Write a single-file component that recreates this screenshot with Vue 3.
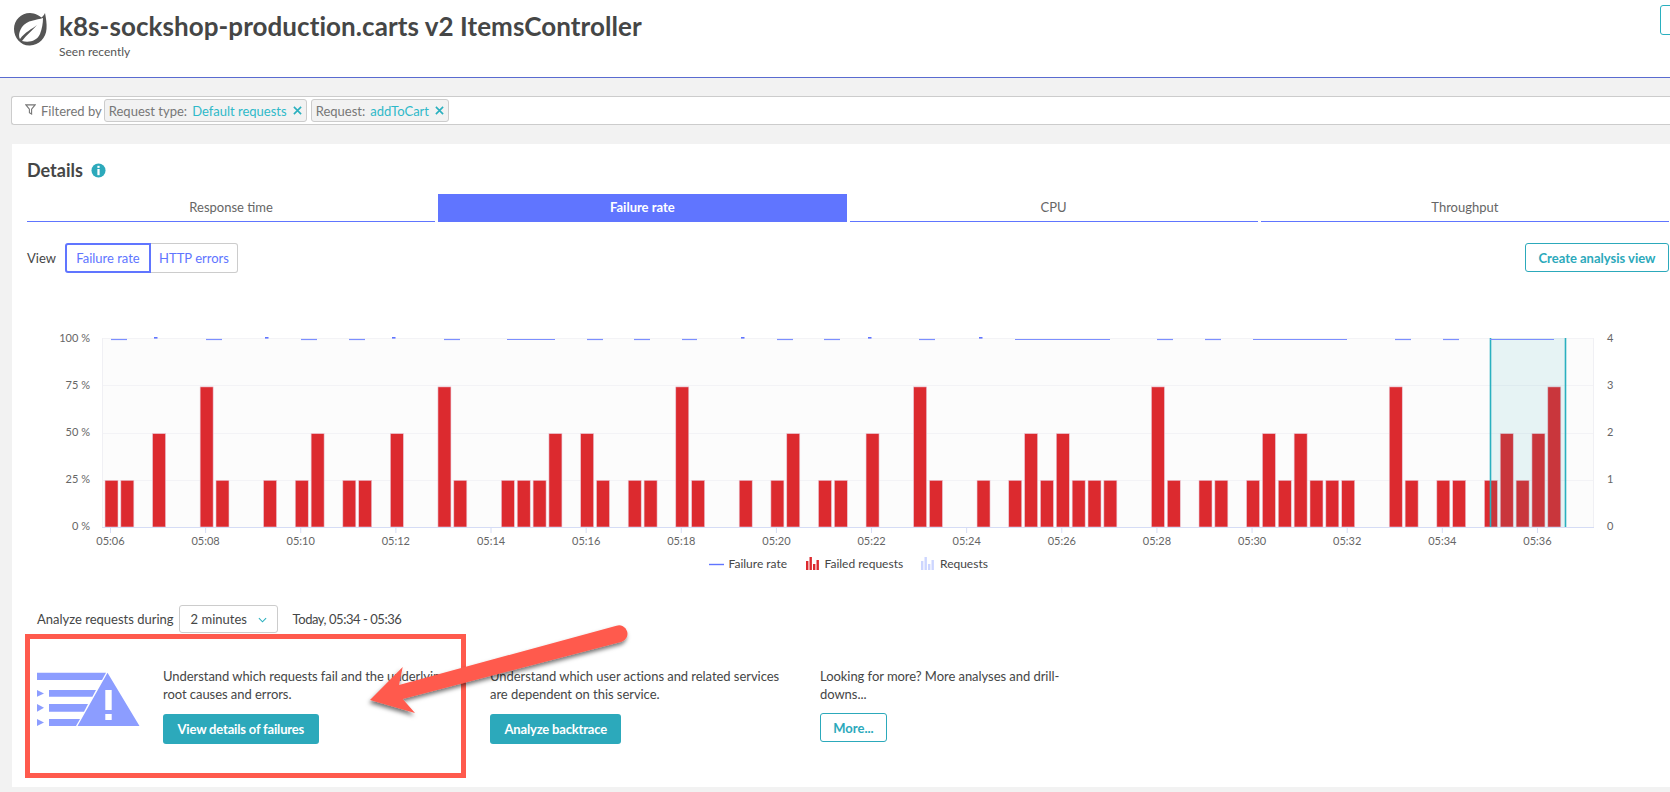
<template>
  <div class="page">
    <!-- Title -->
    <header class="top">
      <svg class="logo" viewBox="0 0 34 34" aria-hidden="true">
        <path d="M32 1 C33 6 34 12 33.5 17 C33 26 26 33 17 33.5 C8 34 1 26 1 17 C1 8 8 1 17 1 C22 1 27 4 28.5 5.5 C29.5 4.5 31 3 32 1 Z" fill="#555"/>
        <path d="M30 6 C24 8 14 8 9 15 C5 21 6 25 7 27 C12 20 19 17 24 13 C20 18 13 23 9 29 C16 31 24 29 27 22 C29 17 30 11 30 6 Z" fill="#fff"/>
      </svg>
      <div class="top__text">
        <h1 class="top__title">k8s-sockshop-production.carts v2 ItemsController</h1>
        <div class="top__sub">Seen recently</div>
      </div>
      <div class="top__stub"></div>
    </header>

    <!-- Filter bar -->
    <div class="filter">
      <svg class="filter__icon" viewBox="0 0 12 12" aria-hidden="true">
        <path d="M1 1 H11 L7.2 5.6 V11 L4.8 9.6 V5.6 Z" fill="none" stroke="#777" stroke-width="1.2"/>
      </svg>
      <span class="filter__label">Filtered by</span>
      <span class="chip" v-for="c in chips" :key="c.name">
        <span class="chip__name">{{ c.name }}</span>
        <span class="chip__value">{{ c.value }}</span>
        <svg class="chip__x" viewBox="0 0 10 10" aria-hidden="true">
          <path d="M1 1 L9 9 M9 1 L1 9" stroke="#2ab0bf" stroke-width="1.8" fill="none"/>
        </svg>
      </span>
    </div>

    <!-- Details card -->
    <section class="card">
      <div class="details">
        <h2 class="details__title">Details</h2>
        <svg class="details__info" viewBox="0 0 16 16" aria-hidden="true">
          <circle cx="8" cy="8" r="7.5" fill="#2ca9bb"/>
          <rect x="6.8" y="3" width="2.4" height="2.2" fill="#fff"/>
          <rect x="6.8" y="6.4" width="2.4" height="6.6" fill="#fff"/>
        </svg>
      </div>

      <nav class="tabs">
        <div v-for="t in tabs" :key="t" class="tab" :class="{ 'tab--on': t === 'Failure rate' }">{{ t }}</div>
      </nav>

      <div class="view">
        <span class="view__label">View</span>
        <div class="toggle">
          <span class="toggle__btn toggle__btn--on">Failure rate</span>
          <span class="toggle__btn">HTTP errors</span>
        </div>
        <button class="btn-outline btn-outline--right">Create analysis view</button>
      </div>

      <!-- viewBox uses page coordinates, simpler to read against the axis -->
      <svg class="chart" viewBox="27 320 1643 260" width="1643" height="260">
        <rect x="102" y="338" width="1492" height="189" fill="#fcfcfc"/>
        <line v-for="g in grid" :key="g" x1="102" x2="1594" :y1="g" :y2="g" stroke="#f3f3f6"/>
        <line x1="102.5" x2="102.5" y1="338" y2="527" stroke="#f0f0f4"/>
        <line x1="1593.5" x2="1593.5" y1="338" y2="527" stroke="#f0f0f4"/>

        <rect v-for="b in bars" :key="b.i" :x="b.x" :y="b.y" width="13" :height="b.h" fill="#dc2a2f" stroke="#e9c9d8" stroke-width="0.6"/>

        <rect x="1490" y="338" width="75.5" height="189" fill="#2aa8b5" fill-opacity="0.1"/>
        <line x1="1490.5" x2="1490.5" y1="338" y2="527" stroke="#2ab0bf" stroke-width="1.6"/>
        <line x1="1565.5" x2="1565.5" y1="338" y2="527" stroke="#2ab0bf" stroke-width="1.6"/>

        <line v-for="s in segs" :key="s[0]" :x1="s[0]" :x2="s[1]" y1="339.5" y2="339.5" stroke="#7c8fff" stroke-width="1.2"/>
        <rect v-for="d in dots" :key="d" :x="d" y="337" width="3.5" height="1.6" fill="#6075ff"/>

        <line x1="102" x2="1594" y1="527.5" y2="527.5" stroke="#d5dcf5"/>
        <g v-for="t in ticks" :key="t.label">
          <line :x1="t.x" :x2="t.x" y1="527" y2="533" stroke="#d5dcf5"/>
          <text class="axis" :x="t.x" y="544.5" text-anchor="middle">{{ t.label }}</text>
        </g>
        <text v-for="l in yLeft" :key="l.t" class="axis" x="90" :y="l.y" text-anchor="end">{{ l.t }}</text>
        <text v-for="l in yRight" :key="l.t" class="axis" x="1607" :y="l.y">{{ l.t }}</text>

        <!-- legend -->
        <line x1="709" x2="724" y1="564.5" y2="564.5" stroke="#6075ff" stroke-width="1.4"/>
        <text class="legend" x="728.5" y="568">Failure rate</text>
        <g fill="#dc2a2f">
          <rect x="806" y="561" width="2.4" height="9"/>
          <rect x="809.5" y="557" width="2.4" height="13"/>
          <rect x="813" y="564" width="2.4" height="6"/>
          <rect x="816.5" y="560" width="2.4" height="10"/>
        </g>
        <text class="legend" x="824.5" y="568">Failed requests</text>
        <g fill="#cdd6ff">
          <rect x="921" y="561" width="2.4" height="9"/>
          <rect x="924.5" y="557" width="2.4" height="13"/>
          <rect x="928" y="564" width="2.4" height="6"/>
          <rect x="931.5" y="560" width="2.4" height="10"/>
        </g>
        <text class="legend" x="940" y="568">Requests</text>
      </svg>

      <div class="analyze">
        <span>Analyze requests during</span>
        <span class="select">2 minutes
          <svg class="select__caret" viewBox="0 0 10 6" aria-hidden="true">
            <path d="M1 1 L5 5 L9 1" fill="none" stroke="#2ab0bf" stroke-width="1.2"/>
          </svg>
        </span>
        <span class="analyze__range">Today, 05:34 - 05:36</span>
      </div>

      <div class="solutions">
        <svg class="solutions__icon" viewBox="37 672 103 55" width="103" height="55" aria-hidden="true">
          <g fill="#8c9dff">
            <path d="M37 672.7 H106 L102 680 H37 Z"/>
            <path d="M37 690 L44 693.4 L37 696.7 Z"/>
            <path d="M49 690 H96 L92.4 696.7 H49 Z"/>
            <path d="M37 704 L44 707.8 L37 711.7 Z"/>
            <path d="M49 704 H88 L84 711.7 H49 Z"/>
            <path d="M37 719 L44 722.4 L37 726 Z"/>
            <path d="M49 719 H80 L76 726 H49 Z"/>
            <path fill-rule="evenodd" d="M107.5 672.7 L139.5 726 H77.5 Z M105.3 690 V710 H111.7 V690 Z M105.3 714 V720 H111.7 V714 Z"/>
          </g>
        </svg>
        <div class="sol">
          <p class="sol__text">Understand which requests fail and the underlying root causes and errors.</p>
          <button class="btn">View details of failures</button>
        </div>
        <div class="sol">
          <p class="sol__text">Understand which user actions and related services are dependent on this service.</p>
          <button class="btn">Analyze backtrace</button>
        </div>
        <div class="sol sol--narrow">
          <p class="sol__text">Looking for more? More analyses and drill-downs...</p>
          <button class="btn-outline">More...</button>
        </div>
      </div>
    </section>

    <!-- Annotation drawn over the screenshot -->
    <div class="mark-box"></div>
    <svg class="mark-arrow" viewBox="0 0 1670 792" aria-hidden="true">
      <defs>
        <filter id="arrow-shadow" x="-10%" y="-10%" width="120%" height="130%">
          <feDropShadow dx="-1" dy="3" stdDeviation="2" flood-color="#000" flood-opacity="0.55"/>
        </filter>
      </defs>
      <path filter="url(#arrow-shadow)" fill="#ff5a4d"
        d="M370 700 L402.7 667 L399 685 L616.5 625.8 A8 8 0 0 1 621.7 641.7 L402.7 699 L415 713 Z"/>
    </svg>
  </div>
</template>

<script setup>
const chips = [
  { name: 'Request type:', value: 'Default requests' },
  { name: 'Request:', value: 'addToCart' },
]
const tabs = ['Response time', 'Failure rate', 'CPU', 'Throughput']

// slot index -> failed request count, one slot is 20 seconds
const counts = {
  0: 1, 1: 1, 3: 2, 6: 3, 7: 1, 10: 1, 12: 1, 13: 2, 15: 1, 16: 1, 18: 2, 21: 3, 22: 1,
  25: 1, 26: 1, 27: 1, 28: 2, 30: 2, 31: 1, 33: 1, 34: 1, 36: 3, 37: 1, 40: 1, 42: 1, 43: 2,
  45: 1, 46: 1, 48: 2, 51: 3, 52: 1, 55: 1, 57: 1, 58: 2, 59: 1, 60: 2, 61: 1, 62: 1, 63: 1,
  66: 3, 67: 1, 69: 1, 70: 1, 72: 1, 73: 2, 74: 1, 75: 2, 76: 1, 77: 1, 78: 1, 81: 3, 82: 1,
  84: 1, 85: 1, 87: 1, 88: 2, 89: 1, 90: 2, 91: 3,
}
const bars = Object.entries(counts).map(([i, n]) => {
  const h = n * 46.7
  return { i, x: 105 + i * 15.855, y: 527 - h, h }
})

const grid = [338.5, 385.5, 433.5, 480.5]
const segs = [
  [111, 127], [206, 222], [301, 317], [349, 365], [444, 460], [507, 555], [587, 603],
  [634, 650], [682, 697], [777, 793], [824, 840], [919, 935], [1015, 1110], [1157, 1173],
  [1205, 1221], [1253, 1347], [1395, 1411], [1443, 1459], [1490, 1554],
]
const dots = [154, 265, 392, 741, 868, 979]

const ticks = []
for (let m = 0; m <= 15; m++) {
  ticks.push({ x: 110.5 + m * 95.13, label: `05:${String(6 + m * 2).padStart(2, '0')}` })
}
const yLeft = [
  { t: '100 %', y: 342 }, { t: '75 %', y: 389 }, { t: '50 %', y: 436 }, { t: '25 %', y: 483 }, { t: '0 %', y: 530 },
]
const yRight = [
  { t: '4', y: 342 }, { t: '3', y: 389 }, { t: '2', y: 436 }, { t: '1', y: 483 }, { t: '0', y: 530 },
]
</script>

<style>
html, body { margin: 0; background: #f2f2f2; overflow: hidden; }
</style>

<style scoped>
.page {
  position: relative;
  width: 1670px;
  height: 792px;
  overflow: hidden;
  background: #f2f2f2;
  color: #454646;
  font-family: "Lato", "Liberation Sans", sans-serif;
  font-size: 13px;
}

/* ─── Title ─────────────────────────────── */
.top {
  position: relative;
  height: 77px;
  box-sizing: content-box;
  display: flex;
  background: #fff;
  border-bottom: 1px solid #5a6bd0;
}
.logo { width: 34px; height: 34px; margin: 12px 12px 0 13px; flex-shrink: 0; }
.top__title { margin: 12px 0 0; font-size: 26px; line-height: 29px; font-weight: 700; color: #454646; white-space: nowrap; letter-spacing: 0.07px; }
.top__sub { margin-top: 3px; font-size: 12px; line-height: 15px; color: #555; }
.top__stub {
  position: absolute; left: 1660px; top: 5px;
  width: 30px; height: 28px;
  border: 1px solid #2ab0bf; border-radius: 3px;
}

/* ─── Filter ────────────────────────────── */
.filter {
  display: flex;
  align-items: center;
  height: 27px;
  margin: 18px 0 0 11px;
  padding-left: 13px;
  background: #fff;
  border: 1px solid #ccc;
  border-right: 0;
  border-radius: 3px 0 0 3px;
  font-size: 13px;
}
.filter__icon { width: 11px; height: 11px; margin-right: 5px; margin-bottom: 2px; }
.filter__label { color: #777; margin-right: 2px; }
.chip {
  display: flex; align-items: center;
  height: 21px; padding: 0 4px;
  margin-right: 4px;
  background: #f2f2f2; border: 1px solid #ccc; border-radius: 3px;
}
.chip__name { color: #777; margin-right: 5px; }
.chip__value { color: #2fb9c9; }
.chip__x { width: 9px; height: 9px; margin-left: 6px; }

/* ─── Card ──────────────────────────────── */
.card {
  height: 643px;
  margin: 19px 0 0 12px;
  padding: 0 1px 0 15px;
  box-sizing: border-box;
  background: #fff;
}
.details { display: flex; align-items: center; padding-top: 16px; height: 20px; box-sizing: content-box; }
.details__title { margin: 0; font-size: 18px; line-height: 20px; font-weight: 700; color: #454646; }
.details__info { width: 15px; height: 15px; margin-left: 8px; }

.tabs { display: grid; grid-template-columns: repeat(4, 1fr); gap: 3px; margin-top: 14px; }
.tab {
  height: 27px; line-height: 27px; text-align: center;
  border-bottom: 1px solid #6075ff;
  color: #666;
}
.tab--on { background: #6075ff; color: #fff; font-weight: 700; }

.view { display: flex; align-items: center; margin-top: 20px; height: 31px; }
.view__label { width: 39px; margin-right: -1px; }
.toggle { display: flex; height: 30px; }
.toggle__btn {
  display: flex; align-items: center; justify-content: center;
  width: 87px; box-sizing: border-box;
  color: #6075ff;
  border: 1px solid #ccc; border-left: 0; border-radius: 0 3px 3px 0;
}
.toggle__btn--on { width: 86px; border: 2px solid #6075ff; border-radius: 3px 0 0 3px; }
.btn-outline {
  height: 29px; padding: 0 14px;
  background: #fff; color: #2ca9bb;
  border: 1px solid #2ca9bb; border-radius: 3px;
  font: 700 13px "Lato", "Liberation Sans", sans-serif;
}
.btn-outline--right { margin-left: auto; width: 144px; padding: 0; }

.chart { display: block; margin-top: 47px; }
.axis { font-size: 11px; fill: #666; }
.legend { font-size: 12px; fill: #454646; }

.analyze { display: flex; align-items: center; margin: 25px 0 0 10px; height: 28px; }
.select {
  display: flex; align-items: center;
  width: 99px; height: 28px;
  margin-left: 5px; padding-left: 11px;
  box-sizing: border-box;
  border: 1px solid #ccc; border-radius: 3px;
}
.select__caret { width: 9px; height: 6px; margin-left: 11px; margin-top: 2px; }
.analyze__range { margin-left: 15px; letter-spacing: -0.45px; }

.solutions {
  display: grid;
  grid-template-columns: 126px 327px 330px 300px;
  margin: 34px 0 0 10px;
}
.solutions__icon { display: block; margin-top: 5px; }
.sol { width: 300px; }
.sol--narrow { width: 250px; }
.sol__text { margin: 0 0 11px; line-height: 18px; letter-spacing: -0.05px; }
.btn {
  height: 30px; padding: 0 14.5px;
  background: #2ca9bb; color: #fff;
  border: 0; border-radius: 3px;
  font: 700 13px "Lato", "Liberation Sans", sans-serif;
  letter-spacing: -0.18px;
}
.sol .btn-outline { display: block; width: 67px; padding: 0; margin-top: -1px; }

/* ─── Annotation ────────────────────────── */
.mark-box {
  position: absolute; left: 25px; top: 634px;
  width: 441px; height: 144px;
  box-sizing: border-box;
  border: 5px solid #ff5a4d;
}
.mark-arrow { position: absolute; left: 0; top: 0; width: 1670px; height: 792px; pointer-events: none; }
</style>
